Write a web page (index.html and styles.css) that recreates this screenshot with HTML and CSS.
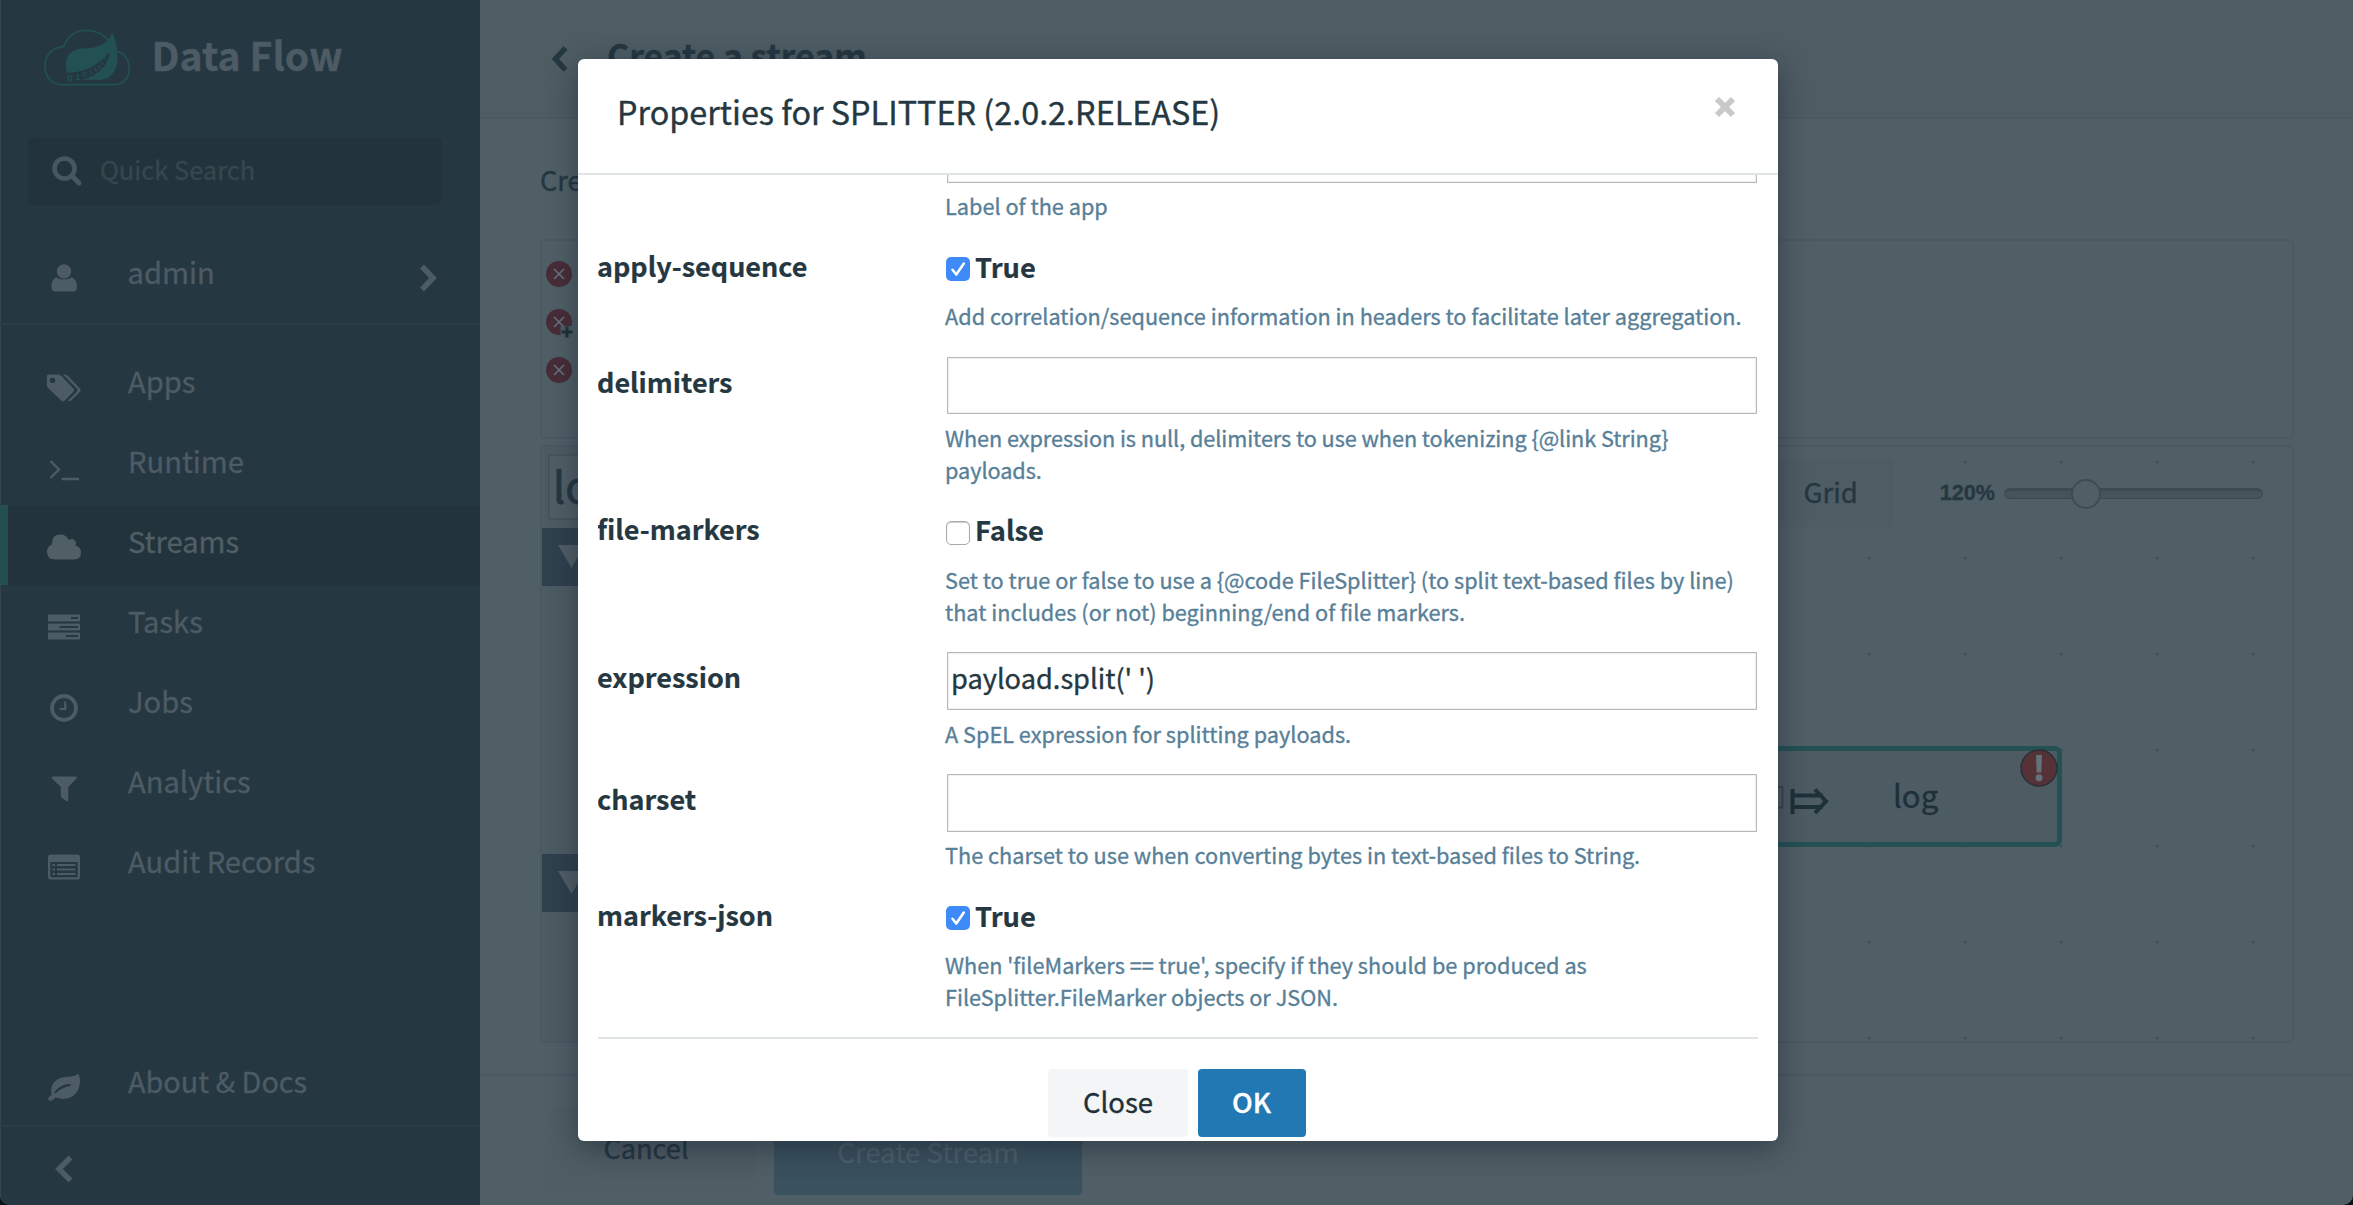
FILE: index.html
```html
<!DOCTYPE html>
<html lang="en">
<head>
<meta charset="utf-8">
<title>Data Flow</title>
<link rel="stylesheet" href="styles.css">
</head>
<body>
<div class="app">
  <aside class="sidebar">
    <div class="brand">
      <svg class="brand-logo" viewBox="0 0 300 225" aria-hidden="true">
        <path class="logo-line" d="M62 194C32 192 15 166 15 137C15 105 38 82 72 79C82 50 105 31 135 31C165 31 190 42 204 60M232 93C255 102 268 122 268 147C268 175 248 194 222 194H62"/>
        <path class="logo-fill" d="M217 38C228 60 234 90 232 122C230 155 210 178 180 179L125 180C160 172 190 150 203 120C208 110 210 100 207 97C200 108 180 130 150 143C125 155 100 157 82 158C76 150 76 125 82 112C92 92 110 85 140 85C175 83 205 70 217 38Z"/>
        <g class="logo-bits">
          <text x="82" y="182" font-size="29">0</text>
          <text x="106" y="181" font-size="27">1</text>
          <text x="130" y="174" font-size="24" transform="rotate(-14 130 174)">0</text>
          <text x="150" y="165" font-size="20" transform="rotate(-22 150 165)">1</text>
          <text x="165" y="155" font-size="18" transform="rotate(-32 165 155)">1</text>
          <text x="178" y="147" font-size="16" transform="rotate(-38 178 147)">0</text>
          <text x="188" y="136" font-size="15" transform="rotate(-48 188 136)">0</text>
          <text x="197" y="122" font-size="14" transform="rotate(-56 197 122)">1</text>
        </g>
      </svg>
      <span class="brand-name">Data Flow</span>
    </div>
    <div class="search">
      <svg class="search-icon" viewBox="0 0 30 30"><circle cx="12.5" cy="12.5" r="10" fill="none" stroke="currentColor" stroke-width="4.6"/><path d="M20 20L27 27" stroke="currentColor" stroke-width="5" stroke-linecap="round"/></svg>
      <span>Quick Search</span>
    </div>
    <div class="user">
      <svg class="nav-icon" viewBox="0 0 36 36"><circle cx="18" cy="11.5" r="7.2"/><path d="M11 17.5C13 20 23 20 25 17.5C29 18 31 22 31 27C31 30 29.500 31.500 27 31.500H9.500C7 31.500 5.500 30 5.500 27C5.500 22 7 18 11 17.500Z"/></svg>
      <span class="user-name">admin</span>
      <svg class="user-arrow" viewBox="0 0 20 30"><path d="M4 3.500L15 15L4 26.500" fill="none" stroke="currentColor" stroke-width="5.500"/></svg>
    </div>
    <nav class="nav">
      <a class="nav-item"><svg class="nav-icon" viewBox="0 0 36 36"><path fill-rule="evenodd" d="M2.500 4.500H12Q14 4.500 15.500 6L27.500 18.500Q29 20 27.500 21.700L18.500 30.800Q17 32 15.500 30.800L2 18Q.8 16.500.8 15V6.500Q.8 4.500 2.500 4.500ZM6.500 7.700A2.700 2.700 0 1 0 6.500 13.100A2.700 2.700 0 1 0 6.500 7.700Z"/><path d="M17 4.500H18.500Q20.500 4.500 22 6L34 18.500Q35.500 20 34 21.700L25 30.800Q23.500 32 22 30.500L31 21.500Q32 20 31 18.800Z"/></svg><span>Apps</span></a>
      <a class="nav-item"><svg class="nav-icon" viewBox="0 0 36 36"><path d="M4.500 11L13 19.500L4.500 28M15.500 29H33" fill="none" stroke="currentColor" stroke-width="2.300"/></svg><span>Runtime</span></a>
      <a class="nav-item active"><svg class="nav-icon" viewBox="0 0 36 36"><path d="M9 29.500Q1 29.500 1 21.500Q1 16.500 6 14.300Q5.500 4.500 14.500 4.500Q20.500 4.500 22.800 10Q27 7.500 29.500 11Q30.500 13 29.500 15.800Q35 17 35 22.500Q35 29.500 28 29.500Z"/></svg><span>Streams</span></a>
      <a class="nav-item"><svg class="nav-icon" viewBox="0 0 36 36"><path fill-rule="evenodd" d="M3 4.500H33Q34 4.500 34 5.500V10.500Q34 11.500 33 11.500H3Q2 11.500 2 10.500V5.500Q2 4.500 3 4.500ZM25 7V9H32V7ZM3 13.500H33Q34 13.500 34 14.500V19.500Q34 20.500 33 20.500H3Q2 20.500 2 19.500V14.500Q2 13.500 3 13.500ZM13.500 16V18H32V16ZM3 22.500H33Q34 22.500 34 23.500V28.500Q34 29.500 33 29.500H3Q2 29.500 2 28.500V23.500Q2 22.500 3 22.500ZM20 25V27H32V25Z"/></svg><span>Tasks</span></a>
      <a class="nav-item"><svg class="nav-icon" viewBox="0 0 36 36"><circle cx="18" cy="18" r="12" fill="none" stroke="currentColor" stroke-width="3.800"/><path d="M19.300 11.500V19H13.500" fill="none" stroke="currentColor" stroke-width="2.200"/></svg><span>Jobs</span></a>
      <a class="nav-item"><svg class="nav-icon" viewBox="0 0 36 36"><path d="M6.500 6.500H30.500Q31.500 7.500 30.500 8.500L22.300 17V30.500Q22 32 20.500 31L15.500 27.500Q14.800 27 14.800 26V17L6 8.500Q5.500 7 6.500 6.500Z"/></svg><span>Analytics</span></a>
      <a class="nav-item"><svg class="nav-icon" viewBox="0 0 36 36"><path fill-rule="evenodd" d="M4.500 4.500H31.500Q34 4.500 34 7V27Q34 29.500 31.500 29.500H4.500Q2 29.500 2 27V7Q2 4.500 4.500 4.500ZM4.300 12V26.500Q4.300 27.300 5 27.300H31Q31.700 27.300 31.700 26.500V12Z"/><path d="M6.500 14H9V16H6.500ZM11 14H29.500V16H11ZM6.500 18.500H9V20.500H6.500ZM11 18.500H29.500V20.500H11ZM6.500 23H9V25H6.500ZM11 23H29.500V25H11Z"/></svg><span>Audit Records</span></a>
    </nav>
    <a class="nav-item about"><svg class="nav-icon" viewBox="0 0 36 36"><path fill-rule="evenodd" d="M32 3.800Q34 6 34 12Q33.500 21 27 26Q20 31 9.500 27.500L6 30.500Q3.500 31.500 2 29.500Q2 27 5.500 25Q3.500 15 11 9.500Q16 6.500 23 6.800Q29 6.500 32 3.800ZM9.500 23.500Q16 17 24.500 16Q25.500 14.500 24 13.800Q14 14.500 8.500 22Q8.200 23.500 9.500 23.500Z"/></svg><span>About &amp; Docs</span></a>
    <div class="collapse"><svg class="collapse-icon" viewBox="0 0 20 30"><path d="M16.500 3.500L5 15L16.500 26.500" fill="none" stroke="currentColor" stroke-width="5.500"/></svg></div>
  </aside>

  <main class="main">
    <header class="page-head">
      <svg class="back-icon" viewBox="0 0 18 28"><path d="M14.500 3L4.500 14L14.500 25" fill="none" stroke="currentColor" stroke-width="5.500"/></svg>
      <h1 class="page-title">Create a stream</h1>
    </header>
    <section class="page-body">
      <p class="intro">Create a stream using text based input or the visual editor.</p>
      <div class="panel errors">
        <svg class="error-icon" viewBox="0 0 28 28"><circle cx="14" cy="14" r="13"/><path d="M9 9L19 19M19 9L9 19"/></svg>
        <svg class="error-icon" viewBox="0 0 28 28"><circle cx="14" cy="14" r="13"/><path d="M9 9L19 19M19 9L9 19"/><path class="plus-bg" d="M15.500 18H28V30H15.500Z"/><path class="plus" d="M22 18.500V29.500M16.500 24H27.500"/></svg>
        <svg class="error-icon" viewBox="0 0 28 28"><circle cx="14" cy="14" r="13"/><path d="M9 9L19 19M19 9L9 19"/></svg>
      </div>
      <div class="panel editor">
        <div class="palette">
          <div class="palette-name">log</div>
          <div class="palette-group first"><i class="tri"></i></div>
          <div class="palette-group"><i class="tri"></i></div>
        </div>
        <div class="canvas">
          <div class="toolbar">
            <span class="grid-btn">Grid</span>
            <b class="zoom-value">120%</b>
            <div class="slider"><i class="thumb"></i></div>
          </div>
          <div class="node">
            <svg class="node-icon" viewBox="0 0 50 28"><path class="thin" d="M0 .8H4.500V21.500H0"/><path d="M14.500 3V28M14.500 9.500H45M14.500 21H45M37 3.500L48 15.300L37 27"/></svg>
            <span class="node-name">log</span>
            <svg class="node-error" viewBox="0 0 38 38"><circle cx="19" cy="19" r="18"/><path d="M16 6H22L21.300 23.500H16.700Z"/><ellipse cx="19" cy="28.700" rx="3.500" ry="3.500" class="bang"/></svg>
          </div>
        </div>
      </div>
    </section>
    <footer class="page-foot">
      <span class="cancel-btn">Cancel</span>
      <span class="create-btn">Create Stream</span>
    </footer>
  </main>
</div>

<div class="modal">
  <div class="modal-head">
    <h2 class="modal-title">Properties for SPLITTER (2.0.2.RELEASE)</h2>
    <svg class="modal-close" viewBox="0 0 22 22"><path d="M3 3L19 19M19 3L3 19"/></svg>
  </div>
  <div class="modal-body">
    <div class="row clipped">
      <span class="label"></span>
      <div class="field"><div class="input"></div><p class="help">Label of the app</p></div>
    </div>
    <div class="row">
      <span class="label">apply-sequence</span>
      <div class="field"><div class="check"><span class="box on"><svg viewBox="0 0 24 24"><path d="M6.500 12.800L10.300 17.500L17.800 6.500"/></svg></span>True</div><p class="help">Add correlation/sequence information in headers to facilitate later aggregation.</p></div>
    </div>
    <div class="row text">
      <span class="label">delimiters</span>
      <div class="field"><div class="input"></div><p class="help tight">When expression is null, delimiters to use when tokenizing {@link String}<br>payloads.</p></div>
    </div>
    <div class="row">
      <span class="label">file-markers</span>
      <div class="field"><div class="check"><span class="box"></span>False</div><p class="help">Set to true or false to use a {@code FileSplitter} (to split text-based files by line)<br>that includes (or not) beginning/end of file markers.</p></div>
    </div>
    <div class="row text">
      <span class="label">expression</span>
      <div class="field"><div class="input">payload.split(' ')</div><p class="help">A SpEL expression for splitting payloads.</p></div>
    </div>
    <div class="row text">
      <span class="label">charset</span>
      <div class="field"><div class="input"></div><p class="help">The charset to use when converting bytes in text-based files to String.</p></div>
    </div>
    <div class="row">
      <span class="label">markers-json</span>
      <div class="field"><div class="check"><span class="box on"><svg viewBox="0 0 24 24"><path d="M6.500 12.800L10.300 17.500L17.800 6.500"/></svg></span>True</div><p class="help">When 'fileMarkers == true', specify if they should be produced as<br>FileSplitter.FileMarker objects or JSON.</p></div>
    </div>
  </div>
  <div class="modal-foot">
    <span class="btn">Close</span>
    <span class="btn primary">OK</span>
  </div>
</div>
</body>
</html>
```
FILE: styles.css
```css
* { box-sizing: border-box; margin: 0; padding: 0; }
html { background: #0b1014; }
body {
  width: 2353px;
  height: 1205px;
  overflow: hidden;
  font-family: "Noto Sans CJK SC", "Noto Sans", sans-serif;
  font-size: 27.5px;
  color: #253741;
  -webkit-text-stroke: .35px currentColor;
}
svg { display: block; flex: none; overflow: visible; }
span { white-space: nowrap; }

.app {
  display: flex;
  height: 1205px;
  background: #505f66;
  border-radius: 0 0 10px 10px;
  overflow: hidden;
}

/* sidebar */
.sidebar {
  width: 480px;
  flex: none;
  display: flex;
  flex-direction: column;
  background: #253741;
  color: #4d5b64;
  box-shadow: inset 1px 0 #33464f;
}
.brand { display: flex; height: 137px; padding: 20px 0 0 40px; }
.brand-logo { width: 100px; height: 75px; }
.logo-line { fill: none; stroke: #235053; stroke-width: 5; }
.logo-fill { fill: #235053; }
.logo-bits { fill: #235053; font-family: "Liberation Sans", sans-serif; font-weight: 700; }
.brand-name { margin-left: 11.500px; font-size: 39.200px; font-weight: 700; line-height: 69px; }
.search {
  display: flex;
  align-items: center;
  gap: 18px;
  width: 414px;
  height: 67.500px;
  margin-left: 28px;
  padding-left: 24px;
  border-radius: 6px;
  background: #23333b;
  color: #37464f;
  font-size: 25.440px;
  line-height: 59px;
}
.search span { height: 64px; }
.search-icon { width: 30px; height: 30px; color: #47565f; }
.user {
  display: flex;
  height: 120px;
  margin-bottom: 20px;
  padding: 54px 42px 0 46px;
  border-bottom: 2px solid #2a3c46;
}
.user .nav-icon { margin-top: 1px; }
.user-name { margin: -10px 0 0 45.500px; font-size: 29.160px; line-height: 45px; }
.user-arrow { width: 20px; height: 30px; margin: 4px 0 0 auto; }
.nav-icon { width: 36px; height: 36px; fill: currentColor; }
.nav-item {
  display: flex;
  height: 80px;
  padding-left: 46px;
  gap: 46px;
  font-size: 29.100px;
  line-height: 71.500px;
}
.nav-item .nav-icon { margin-top: 25px; }
.nav-item.active { background: #23333b; box-shadow: inset 8px 0 #23504f; color: #505f66; }
.about { margin-top: auto; }
.about { font-size: 28.800px; }
.collapse { height: 80px; padding: 27px 0 0 54px; border-top: 2px solid #2a3c46; }
.collapse-icon { width: 20px; height: 30px; }

/* page */
.main { flex: 1; display: flex; flex-direction: column; }
.page-head {
  display: flex;
  height: 119px;
  padding-left: 71px;
  background: #4e5c63;
  border-bottom: 2px solid #4a5963;
}
.back-icon { width: 18px; height: 28px; margin-top: 45px; }
.page-title { margin-left: 38px; font-size: 33.800px; line-height: 110px; }
.page-body { height: 957px; padding: 36px 59px 0 60px; border-bottom: 2px solid #4a5963; }
.intro { height: 84px; font-size: 27.200px; line-height: 48px; }
.panel { border: 2px solid #4b5963; border-radius: 5px; }
.errors { height: 200px; padding: 19px 0 0 2.500px; display: flex; flex-direction: column; gap: 20px; }
.error-icon { width: 28px; height: 28px; stroke: #65727b; stroke-width: 1.600; }
.error-icon circle { fill: #482d38; stroke: none; }
.error-icon .plus-bg { fill: #4d5c63; stroke: none; }
.error-icon .plus { stroke: #1f323b; stroke-width: 3; }
.editor { display: flex; height: 598px; margin-top: 6px; }
.palette { width: 358px; background: #4d5b62; }
.palette-name {
  width: 340px;
  height: 66px;
  margin: 7px 0 0 6px;
  padding-left: 3px;
  border: 2px solid #46555d;
  background: #505f66;
  font-size: 43px;
  line-height: 57px;
  -webkit-text-stroke-width: .8px;
}
.palette-group { height: 58px; padding: 17px 0 0 16px; background: #2f414d; }
.palette-group.first { margin: 8px 0 268px; }
.tri { display: block; width: 27px; height: 23px; background: #505f66; clip-path: polygon(0 0, 100% 0, 50% 100%); }
.canvas {
  flex: 1;
  background: radial-gradient(circle at 1px 1px, #3f4f57 1.300px, transparent 1.800px) 8px 14px / 96px 96px;
}
.toolbar { display: flex; height: 299px; padding: 11px 29px 0 0; justify-content: flex-end; align-items: flex-start; }
.grid-btn { height: 69px; padding: 0 36px 0 60px; border-radius: 4px; background: #4e5c63; line-height: 66px; }
.zoom-value { margin-left: 46px; font: 700 21.600px/70px "Liberation Sans", sans-serif; }
.slider {
  width: 259px;
  height: 11px;
  margin: 30px 0 0 9px;
  padding-left: 66px;
  border: 1px solid #3c4a52;
  border-top-width: 3px;
  border-radius: 6px;
  background: #45545c;
}
.thumb {
  display: block;
  width: 30px;
  height: 30px;
  margin-top: -12px;
  border: 2px solid #3d4c54;
  border-radius: 50%;
  background: #505f66;
}
.node {
  display: flex;
  width: 444px;
  height: 101px;
  margin-left: 718px;
  padding-left: 155px;
  border: 5px solid #255054;
  border-radius: 7px;
  background: #4d5b62;
}
.node-icon { width: 50px; height: 28px; margin-top: 35px; fill: none; stroke: #1e3038; stroke-width: 4; }
.node-icon .thin { stroke: #33444d; stroke-width: 1.800; }
.node-name { margin-left: 65px; font-size: 31.100px; line-height: 88px; color: #1e3038; }
.node-error { width: 38px; height: 38px; margin: -2px -1px 0 auto; fill: #64727a; }
.node-error circle { fill: #553138; stroke: #2b3038; stroke-width: 1.500; }
.page-foot { display: flex; align-items: flex-start; gap: 20px; padding: 31px 0 0 61px; }
.cancel-btn { width: 213px; height: 84px; border-radius: 4px; background: #4f5d64; text-align: center; line-height: 81px; padding-right: 3px; font-size: 27.200px; }
.create-btn { width: 308px; height: 88px; border-radius: 4px; background: #3a515e; color: #4d616b; text-align: center; line-height: 89px; }

/* properties dialog */
.modal {
  position: absolute;
  left: 578px;
  top: 59px;
  width: 1200px;
  height: 1082px;
  display: flex;
  flex-direction: column;
  border-radius: 6px;
  background: #fff;
  box-shadow: 0 8px 30px rgba(18, 24, 40, .45);
}
.modal-head {
  display: flex;
  justify-content: space-between;
  height: 116px;
  padding: 0 42px 0 39px;
  border-bottom: 2px solid #dfe4e4;
}
.modal-title { font-size: 32.360px; font-weight: 400; line-height: 104px; }
.modal-close { width: 22px; height: 22px; margin-top: 37px; stroke: #c9c9c9; stroke-width: 6; }
.modal-body {
  display: flex;
  flex-direction: column;
  gap: 24.500px;
  height: 864px;
  margin: 0 20px;
  overflow: hidden;
  border-bottom: 2px solid #dfe4e4;
}
.row { display: grid; grid-template-columns: 347px 1fr; flex: none; }
.row.clipped { margin-top: -50px; }
.label { font-size: 27px; font-weight: 700; line-height: 38.400px; margin-left: -1px; -webkit-text-stroke-width: .2px; }
.row.text .label { padding-top: 6px; }
.input {
  height: 57.600px;
  margin: 0 1px 7.600px 2px;
  padding-left: 3px;
  border: 1px solid #b9b9b9;
  box-shadow: inset 0 0 1px 1px #efefef;
  font-size: 27.200px;
  line-height: 49px;
}
.help { font-size: 21.700px; line-height: 32px; color: #587f98; white-space: nowrap; }
.help.tight { letter-spacing: -.07px; }
.check { display: flex; height: 53.500px; font-weight: 700; line-height: 38.400px; font-size: 27.300px; -webkit-text-stroke-width: .2px; }
.box { width: 24px; height: 24px; margin: 10.600px 5px 0 1px; border: 1px solid #a9a9a9; border-radius: 5px; box-shadow: inset 0 1px 1px #ccc; }
.box.on { border: 0; background: #3f8af9; box-shadow: none; }
.box path { fill: none; stroke: #fff; stroke-width: 2.600; stroke-linecap: round; stroke-linejoin: round; }
.modal-foot { display: flex; justify-content: center; gap: 10px; padding: 30px 2px 0 0; }
.btn { height: 68px; padding: 0 34.500px; border-radius: 4px; background: #f4f5f7; color: #22303a; line-height: 64px; }
.btn.primary { background: #2278b2; color: #fff; font-weight: 500; }
```
